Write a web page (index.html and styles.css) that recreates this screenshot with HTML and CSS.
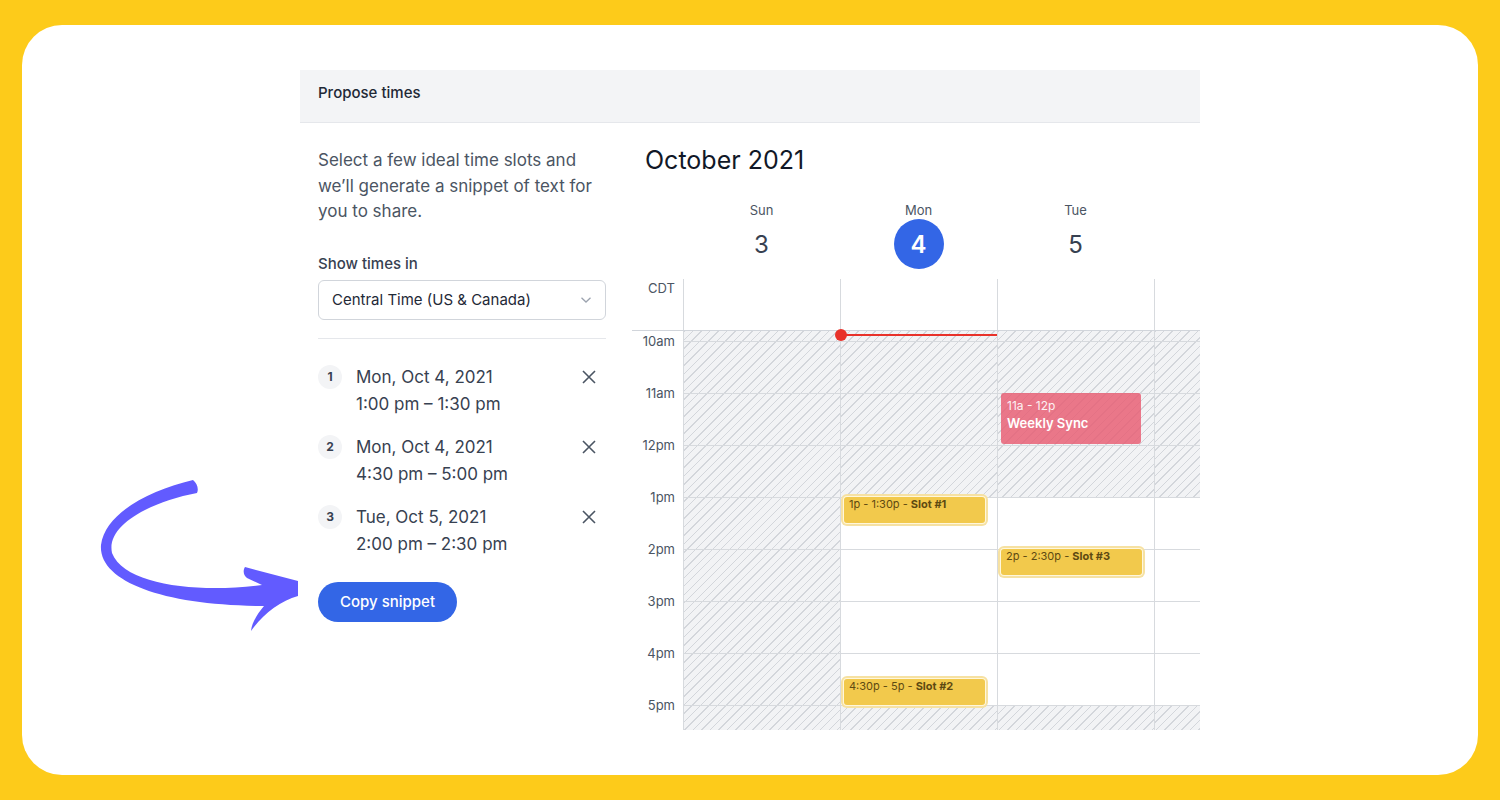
FILE: index.html
```html
<!DOCTYPE html>
<html>
<head>
<title>Propose times</title>
<meta name="viewport" content="width=device-width, initial-scale=1.0">
<link rel="stylesheet" href="styles.css">
</head>
<body>
<div class="card">
	<!-- hand drawn pointer towards the copy button -->
	<svg class="arrow" width="220" height="170" viewBox="90 470 220 170">
		<path fill="#625bff" d="M 193 480 C 150 490, 105 513, 101 545 C 98 582, 165 606, 264 606 C 258 613, 252 622, 251 631 C 262 615, 280 601, 298 596 L 298 581 L 245 567 C 243 570, 243 575, 247 578 L 262 585 C 200 593, 125 586, 112 553 C 106 525, 150 502, 197 493 C 199 489, 197 483, 193 480 Z"/>
	</svg>

	<div class="panel">
		<div class="panel-head">Propose times</div>
		<div class="panel-body">

			<div class="side">
				<p class="intro">Select a few ideal time slots and we’ll generate a snippet of text for you to share.</p>
				<div class="field-label">Show times in</div>
				<div class="select">
					<span>Central Time (US &amp; Canada)</span>
					<svg width="12" height="8" viewBox="0 0 12 8"><path d="M1.5 1.8 L6 6 L10.5 1.8" fill="none" stroke="#9ca3af" stroke-width="1.3"/></svg>
				</div>
				<div class="divider"></div>

				<ol class="picked">
					<li class="picked-item">
						<span class="num">1</span>
						<div class="picked-text"><div>Mon, Oct 4, 2021</div><div>1:00 pm – 1:30 pm</div></div>
						<span class="remove"><svg width="14" height="14" viewBox="0 0 14 14"><path d="M1 1 L13 13 M13 1 L1 13" stroke="#4b5563" stroke-width="1.6"/></svg></span>
					</li>
					<li class="picked-item">
						<span class="num">2</span>
						<div class="picked-text"><div>Mon, Oct 4, 2021</div><div>4:30 pm – 5:00 pm</div></div>
						<span class="remove"><svg width="14" height="14" viewBox="0 0 14 14"><path d="M1 1 L13 13 M13 1 L1 13" stroke="#4b5563" stroke-width="1.6"/></svg></span>
					</li>
					<li class="picked-item">
						<span class="num">3</span>
						<div class="picked-text"><div>Tue, Oct 5, 2021</div><div>2:00 pm – 2:30 pm</div></div>
						<span class="remove"><svg width="14" height="14" viewBox="0 0 14 14"><path d="M1 1 L13 13 M13 1 L1 13" stroke="#4b5563" stroke-width="1.6"/></svg></span>
					</li>
				</ol>

				<button class="copy">Copy snippet</button>
			</div>

			<div class="cal">
				<div class="cal-title">October 2021</div>

				<div class="cal-days">
					<div></div>
					<div class="day-head"><span class="day-name">Sun</span><span class="day-num">3</span></div>
					<div class="day-head"><span class="day-name">Mon</span><span class="day-num today">4</span></div>
					<div class="day-head"><span class="day-name">Tue</span><span class="day-num">5</span></div>
					<div class="day-head"></div>
				</div>

				<div class="cal-allday">
					<div class="tz">CDT</div>
					<div class="allday-cell"></div>
					<div class="allday-cell"></div>
					<div class="allday-cell"></div>
					<div class="allday-cell"></div>
				</div>

				<!-- 52px per hour, view starts at 9:48 -->
				<div class="cal-body">
					<div class="gutter">
						<span class="hour" style="top: 10px">10am</span>
						<span class="hour" style="top: 62px">11am</span>
						<span class="hour" style="top: 114px">12pm</span>
						<span class="hour" style="top: 166px">1pm</span>
						<span class="hour" style="top: 218px">2pm</span>
						<span class="hour" style="top: 270px">3pm</span>
						<span class="hour" style="top: 322px">4pm</span>
						<span class="hour" style="top: 374px">5pm</span>
					</div>

					<div class="day">
						<div class="off" style="top: 0; height: 399px"></div>
					</div>

					<div class="day">
						<div class="off" style="top: 0; height: 166px"></div>
						<div class="off" style="top: 374px; height: 25px"></div>
						<div class="now"></div>
						<div class="ev slot" style="top: 166px; height: 26px">1p - 1:30p - <b>Slot #1</b></div>
						<div class="ev slot" style="top: 348px; height: 26px">4:30p - 5p - <b>Slot #2</b></div>
					</div>

					<div class="day">
						<div class="off" style="top: 0; height: 166px"></div>
						<div class="off" style="top: 374px; height: 25px"></div>
						<div class="ev busy" style="top: 62px; height: 51px"><span class="ev-time">11a - 12p</span><span class="ev-name">Weekly Sync</span></div>
						<div class="ev slot" style="top: 218px; height: 26px">2p - 2:30p - <b>Slot #3</b></div>
					</div>

					<div class="day">
						<div class="off" style="top: 0; height: 166px"></div>
						<div class="off" style="top: 374px; height: 25px"></div>
					</div>

					<div class="lines"></div>
				</div>
			</div>

		</div>
	</div>
</div>
</body>
</html>
```

FILE: styles.css
```css
* { box-sizing: border-box; }

body {
	margin: 0;
	padding: 25px 22px;
	background: #fdcb1a;
	font-family: Inter, "Noto Sans", sans-serif;
	color: #374151;
}

.card {
	position: relative;
	height: 750px;
	background: #fff;
	border-radius: 40px;
	padding-top: 45px;
}

.arrow {
	position: absolute;
	left: 68px;
	top: 445px;
}

.panel {
	width: 900px;
	margin: 0 auto;
}

.panel-head {
	height: 53px;
	padding: 14px 18px 0;
	background: #f3f4f6;
	border-bottom: 1px solid #e5e7eb;
	font-size: 15px;
	line-height: 18px;
	font-weight: 500;
	color: #1f2937;
}

.panel-body {
	display: flex;
	gap: 26px;
	padding-left: 18px;
}

/* left column */
.side {
	width: 288px;
	flex: none;
	padding-top: 25px;
}

.intro {
	margin: 0;
	font-size: 17px;
	line-height: 25.5px;
	color: #4b5563;
}

.field-label {
	margin-top: 29px;
	font-size: 15px;
	line-height: 20px;
	font-weight: 500;
	color: #374151;
}

.select {
	margin-top: 6px;
	height: 40px;
	display: flex;
	align-items: center;
	justify-content: space-between;
	padding: 0 13px;
	border: 1px solid #d1d5db;
	border-radius: 6px;
	font-size: 15px;
	color: #1f2937;
}

.divider {
	margin-top: 18px;
	border-top: 1px solid #e5e7eb;
}

.picked {
	list-style: none;
	margin: 25px 0 0;
	padding: 0;
	display: flex;
	flex-direction: column;
	gap: 16px;
}

.picked-item {
	display: flex;
	align-items: flex-start;
}

.num {
	width: 24px;
	height: 24px;
	margin-top: 1px;
	border-radius: 50%;
	background: #f3f4f6;
	display: flex;
	align-items: center;
	justify-content: center;
	font-size: 12px;
	font-weight: 700;
	color: #374151;
	flex: none;
}

.picked-text {
	margin-left: 14px;
	flex: 1;
	font-size: 17px;
	line-height: 27px;
	color: #374151;
}

.remove {
	margin-top: 6px;
	margin-right: 10px;
	display: flex;
}

.copy {
	margin-top: 24px;
	height: 40px;
	padding: 0 22px;
	border: none;
	border-radius: 20px;
	background: #3366e6;
	color: #fff;
	font-family: inherit;
	font-size: 15px;
	font-weight: 500;
}

/* calendar */
.cal {
	width: 568px;
	flex: none;
	overflow: hidden;
	padding-top: 21px;
}

.cal-title {
	padding-left: 13px;
	font-size: 25px;
	line-height: 32px;
	color: #111827;
}

.cal-days,
.cal-allday,
.cal-body {
	display: grid;
	grid-template-columns: 51px repeat(4, 157px);
}

.cal-days {
	margin-top: 25px;
	height: 78px;
}

.day-head {
	display: flex;
	flex-direction: column;
	align-items: center;
}

.day-name {
	font-size: 13px;
	line-height: 18px;
	color: #4b5563;
}

.day-num {
	width: 50px;
	height: 50px;
	margin-top: 0;
	display: flex;
	align-items: center;
	justify-content: center;
	font-size: 24px;
	color: #374151;
}

.day-num.today {
	border-radius: 50%;
	background: #3366e6;
	color: #fff;
	font-weight: 600;
}

.cal-allday {
	height: 52px;
	border-bottom: 1px solid #d1d5db;
}

.tz {
	padding: 0 8px 0 0;
	text-align: right;
	font-size: 13px;
	line-height: 18px;
	color: #4b5563;
}

.allday-cell,
.day {
	border-left: 1px solid #d7dade;
}

.cal-body {
	position: relative;
	height: 399px;
}

.gutter {
	position: relative;
}

.hour {
	position: absolute;
	right: 8px;
	margin-top: -9px;
	font-size: 13px;
	line-height: 18px;
	color: #4b5563;
}

.day {
	position: relative;
}

.off {
	position: absolute;
	left: 0;
	right: 0;
	background-color: #f2f3f5;
	background-image: repeating-linear-gradient(135deg, #d3d6db 0 1px, #f2f3f5 1px 6px);
}

.lines {
	position: absolute;
	left: 51px;
	right: 0;
	top: 10px;
	bottom: 0;
	background: repeating-linear-gradient(to bottom, #d7dade 0 1px, transparent 1px 52px);
	z-index: 1;
	pointer-events: none;
}

.now {
	position: absolute;
	left: 0;
	right: 0;
	top: 3px;
	height: 2px;
	background: #e8322a;
	z-index: 3;
}

.now::before {
	content: "";
	position: absolute;
	left: -6px;
	top: -5px;
	width: 12px;
	height: 12px;
	border-radius: 50%;
	background: #e8322a;
}

.ev {
	position: absolute;
	left: 3px;
	width: 141px;
	border-radius: 3px;
	z-index: 2;
}

.slot {
	padding: 0 5px;
	background: #f2c94c;
	box-shadow: 0 0 0 1px #fff7dc, 0 0 0 3px #f6e1a2;
	font-size: 11px;
	line-height: 15px;
	color: #5e4a12;
}

.slot b {
	font-weight: 700;
}

.busy {
	width: 140px;
	padding: 4px 6px;
	background-color: rgba(232, 92, 114, 0.82);
	display: flex;
	flex-direction: column;
	color: #fff;
}

.ev-time {
	font-size: 12px;
	line-height: 17px;
	opacity: 0.9;
}

.ev-name {
	font-size: 13px;
	line-height: 19px;
	font-weight: 600;
}
```
